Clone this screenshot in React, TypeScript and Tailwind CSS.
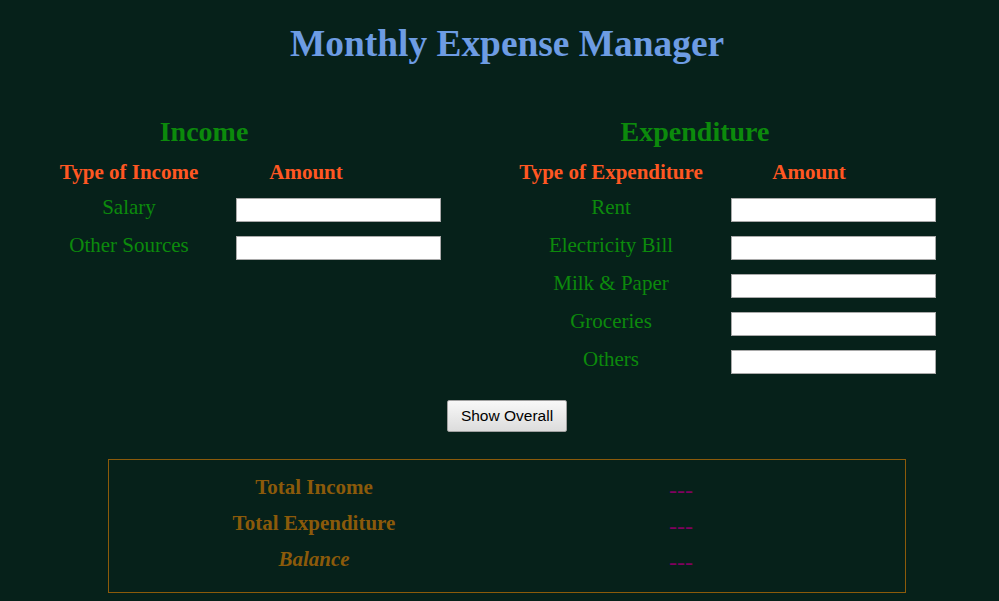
const incomeRows = ["Salary", "Other Sources"]
const expenseRows = ["Rent", "Electricity Bill", "Milk & Paper", "Groceries", "Others"]

const summaryRows = [
    { label: "Total Income", italic: false },
    { label: "Total Expenditure", italic: false },
    { label: "Balance", italic: true },
]

const serif = "font-['Liberation_Serif','Times_New_Roman',serif]"

function AmountInput() {
    return (
        <input
            type="text"
            className="mt-[3px] h-[24px] w-[205px] border border-[#a9a9a9] bg-white outline-none"
        />
    )
}

export default function App() {
    return (
        <div className={`min-h-[601px] w-full bg-[#06211a] ${serif} overflow-hidden`}>
            {/* Title */}
            <h1 className="pt-[23px] pl-[290px] text-[37.4px] leading-[42px] font-bold text-[#6d9ce3]">
                Monthly Expense Manager
            </h1>

            <div className="mt-[51px] flex items-start">
                {/* Income */}
                <div className="w-[500px] shrink-0 pl-[40px]">
                    <h2 className="w-[328px] text-center text-[28px] leading-[32px] font-bold text-[#0c8a0c]">
                        Income
                    </h2>
                    <div className="mt-[12px] flex text-[21px] leading-[24px] font-bold text-[#ff5722]">
                        <div className="w-[178px] text-center">Type of Income</div>
                        <div className="w-[176px] text-center">Amount</div>
                    </div>
                    <div className="mt-[11px]">
                        {incomeRows.map((row) => (
                            <div key={row} className="flex h-[38px] items-start">
                                <div className="w-[178px] text-center text-[21px] leading-[24px] text-[#0c8a0c]">
                                    {row}
                                </div>
                                <div className="pl-[18px]">
                                    <AmountInput />
                                </div>
                            </div>
                        ))}
                    </div>
                </div>

                {/* Expenditure */}
                <div className="w-[499px] shrink-0 pl-[11px]">
                    <h2 className="w-[368px] text-center text-[28px] leading-[32px] font-bold text-[#0c8a0c]">
                        Expenditure
                    </h2>
                    <div className="mt-[12px] flex text-[21px] leading-[24px] font-bold text-[#ff5722]">
                        <div className="w-[200px] text-center">Type of Expenditure</div>
                        <div className="w-[196px] text-center">Amount</div>
                    </div>
                    <div className="mt-[11px]">
                        {expenseRows.map((row) => (
                            <div key={row} className="flex h-[38px] items-start">
                                <div className="w-[200px] text-center text-[21px] leading-[24px] text-[#0c8a0c]">
                                    {row}
                                </div>
                                <div className="pl-[20px]">
                                    <AmountInput />
                                </div>
                            </div>
                        ))}
                    </div>
                </div>
            </div>

            {/* Button */}
            <div className="mt-[15px] pl-[447px]">
                <button className="h-[32px] w-[120px] rounded-[2px] border border-[#a0a0a0] bg-gradient-to-b from-[#f8f8f8] to-[#dcdcdc] font-['Liberation_Sans',Arial,sans-serif] text-[15.5px] text-black">
                    Show Overall
                </button>
            </div>

            {/* Summary */}
            <div className="mt-[27px] ml-[108px] w-[798px] border border-[#8b5a0a] pt-[10px] pb-[14px]">
                {summaryRows.map(({ label, italic }) => (
                    <div key={label} className="flex h-[36px] items-center">
                        <div
                            className={`w-[410px] text-center text-[21px] font-bold text-[#8b5a0a] ${italic ? "italic" : ""}`}
                        >
                            {label}
                        </div>
                        <div className="w-[324px] pt-[3px] text-center text-[24px] leading-[24px] text-[#800060]">
                            ---
                        </div>
                    </div>
                ))}
            </div>
        </div>
    )
}
